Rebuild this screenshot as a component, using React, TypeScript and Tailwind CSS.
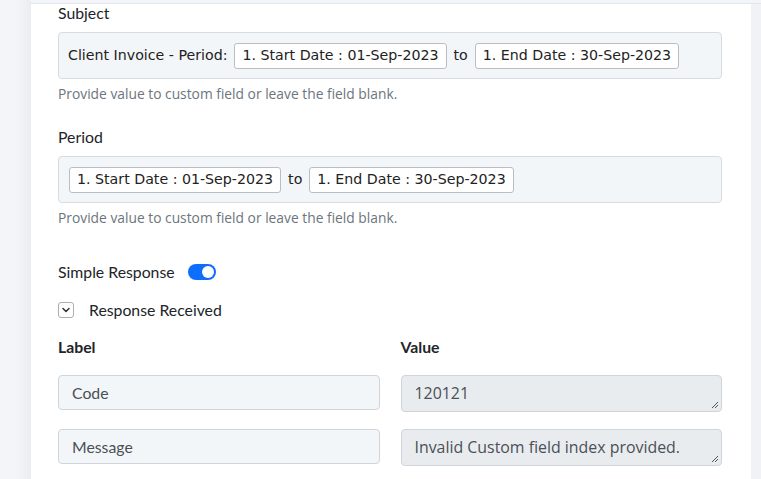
import React from "react";

const Chip = ({ children }: { children: React.ReactNode }) => (
  <span className="inline-flex items-center h-[26px] px-[7px] bg-white border border-[#b9bec5] rounded-[3px] text-[#222] whitespace-nowrap">
    {children}
  </span>
);

const Help = () => (
  <div className="mt-[5px] text-[13.8px] leading-[20px] text-[#6c757d]" style={{ fontFamily: '"Open Sans", sans-serif' }}>
    Provide value to custom field or leave the field blank.
  </div>
);

export default function App() {
  const labelFont = { fontFamily: 'Lato, "Noto Sans", sans-serif' };
  const chipFont = { fontFamily: '"DejaVu Sans", Verdana, sans-serif' };
  const openFont = { fontFamily: '"Open Sans", sans-serif' };
  return (
    <div className="w-[761px] h-[479px] overflow-hidden flex bg-[#f3f5f8]">
      <div className="w-[31px] shrink-0 bg-gradient-to-r from-[#f3f5f8] via-[#f3f5f8] to-[#e9edf2]" />
      <div className="w-[720px] shrink-0 bg-white border-t border-[#dfe5ee] mt-[3px] pl-[27px] pr-[29px]" style={labelFont}>
        <div className="text-[15.8px] text-[#212529] leading-[18px]">Subject</div>
        <div className="mt-[10px] h-[47px] bg-[#f3f6f9] border border-[#d7dce2] rounded-[4px] flex items-center gap-[7px] pl-[9px] text-[14.2px]" style={chipFont}>
          <span className="text-[#222]">Client Invoice - Period:</span>
          <Chip>1. Start Date : 01-Sep-2023</Chip>
          <span className="text-[#222]">to</span>
          <Chip>1. End Date : 30-Sep-2023</Chip>
        </div>
        <Help />
        <div className="mt-[24px] text-[15.8px] text-[#212529] leading-[18px]">Period</div>
        <div className="mt-[10px] h-[47px] bg-[#f3f6f9] border border-[#d7dce2] rounded-[4px] flex items-center gap-[7px] pl-[10px] text-[14.2px]" style={chipFont}>
          <Chip>1. Start Date : 01-Sep-2023</Chip>
          <span className="text-[#222]">to</span>
          <Chip>1. End Date : 30-Sep-2023</Chip>
        </div>
        <Help />
        <div className="mt-[34px] flex items-center h-[20px]">
          <span className="text-[15.8px] text-[#212529]">Simple Response</span>
          <span className="ml-[13px] w-[28px] h-[16px] rounded-full bg-[#0d6efd] flex items-center justify-end pr-[2px]">
            <span className="w-[12px] h-[12px] rounded-full bg-white" />
          </span>
        </div>
        <div className="mt-[18px] flex items-center h-[20px]">
          <span className="w-[16px] h-[16px] border border-[#a9aeb5] rounded-[3px] flex items-center justify-center">
            <svg width="8" height="6" viewBox="0 0 8 6" fill="none">
              <path d="M1 1.5 L4 4.5 L7 1.5" stroke="#333" strokeWidth="1.5" strokeLinecap="round" strokeLinejoin="round" />
            </svg>
          </span>
          <span className="ml-[15px] text-[15.8px] text-[#212529]">Response Received</span>
        </div>
        <div className="mt-[17px] grid grid-cols-2 gap-x-[21px]">
          <div className="text-[15.8px] font-bold text-[#212529] h-[20px] leading-[20px]">Label</div>
          <div className="text-[15.8px] font-bold text-[#212529] h-[20px] leading-[20px]">Value</div>
          <div className="mt-[18px] h-[35px] bg-[#f3f6f9] border border-[#d0d5dc] rounded-[4px] flex items-center pl-[13px] text-[15.8px] text-[#495057]">Code</div>
          <div className="mt-[18px] relative h-[37px] bg-[#e9ecef] border border-[#d0d5dc] rounded-[4px] flex items-center pl-[13px] text-[15.9px] text-[#495057]" style={openFont}>
            120121
            <svg className="absolute right-[2px] bottom-[2px]" width="8" height="8" viewBox="0 0 8 8">
              <path d="M7 1 L1 7 M7 4 L4 7" stroke="#555" strokeWidth="1" />
            </svg>
          </div>
          <div className="mt-[17px] h-[35px] bg-[#f3f6f9] border border-[#d0d5dc] rounded-[4px] flex items-center pl-[13px] text-[15.8px] text-[#495057]">Message</div>
          <div className="mt-[17px] relative h-[37px] bg-[#e9ecef] border border-[#d0d5dc] rounded-[4px] flex items-center pl-[13px] text-[15.9px] text-[#495057]" style={openFont}>
            Invalid Custom field index provided.
            <svg className="absolute right-[2px] bottom-[2px]" width="8" height="8" viewBox="0 0 8 8">
              <path d="M7 1 L1 7 M7 4 L4 7" stroke="#555" strokeWidth="1" />
            </svg>
          </div>
        </div>
      </div>
      <div className="flex-1 bg-[#f0f2f5] mt-[3px] border-t border-[#dfe5ee]" />
    </div>
  );
}
